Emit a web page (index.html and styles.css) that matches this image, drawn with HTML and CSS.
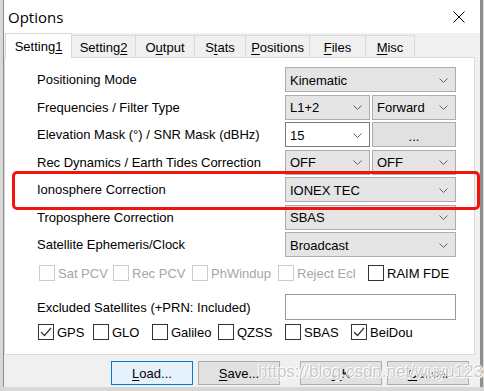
FILE: index.html
```html
<!DOCTYPE html>
<html lang="en">
<head>
    <meta charset="UTF-8">
    <title>Options</title>
    <link rel="stylesheet" href="styles.css">
</head>
<body>
    <div class="window">
        <div class="titlebar">
            <span class="title">Options</span>
            <svg class="close" width="12" height="12" viewBox="0 0 12 12">
                <path d="M0.5 0.5 L11.5 11.5 M11.5 0.5 L0.5 11.5" stroke="#000" stroke-width="1" fill="none"/>
            </svg>
        </div>

        <div class="tabs">
            <div class="tab active">Setting<u>1</u></div>
            <div class="tab">Setting<u>2</u></div>
            <div class="tab">O<u>u</u>tput</div>
            <div class="tab">S<u>t</u>ats</div>
            <div class="tab"><u>P</u>ositions</div>
            <div class="tab"><u>F</u>iles</div>
            <div class="tab"><u>M</u>isc</div>
        </div>

        <div class="panel">
            <div class="settings">
                <div class="label">Positioning Mode</div>
                <div class="combo span2">Kinematic<svg class="chev" width="9" height="5" viewBox="0 0 9 5"><path d="M0.5 0.5 L4.5 4.5 L8.5 0.5" /></svg></div>

                <div class="label">Frequencies / Filter Type</div>
                <div class="combo">L1+2<svg class="chev" width="9" height="5" viewBox="0 0 9 5"><path d="M0.5 0.5 L4.5 4.5 L8.5 0.5" /></svg></div>
                <div class="combo">Forward<svg class="chev" width="9" height="5" viewBox="0 0 9 5"><path d="M0.5 0.5 L4.5 4.5 L8.5 0.5" /></svg></div>

                <div class="label">Elevation Mask (°) / SNR Mask (dBHz)</div>
                <div class="combo edit">15<svg class="chev" width="9" height="5" viewBox="0 0 9 5"><path d="M0.5 0.5 L4.5 4.5 L8.5 0.5" /></svg></div>
                <div class="button dots">...</div>

                <div class="label">Rec Dynamics / Earth Tides Correction</div>
                <div class="combo">OFF<svg class="chev" width="9" height="5" viewBox="0 0 9 5"><path d="M0.5 0.5 L4.5 4.5 L8.5 0.5" /></svg></div>
                <div class="combo">OFF<svg class="chev" width="9" height="5" viewBox="0 0 9 5"><path d="M0.5 0.5 L4.5 4.5 L8.5 0.5" /></svg></div>

                <div class="label marked">Ionosphere Correction</div>
                <div class="combo span2">IONEX TEC<svg class="chev" width="9" height="5" viewBox="0 0 9 5"><path d="M0.5 0.5 L4.5 4.5 L8.5 0.5" /></svg></div>

                <div class="label">Troposphere Correction</div>
                <div class="combo span2">SBAS<svg class="chev" width="9" height="5" viewBox="0 0 9 5"><path d="M0.5 0.5 L4.5 4.5 L8.5 0.5" /></svg></div>

                <div class="label">Satellite Ephemeris/Clock</div>
                <div class="combo span2">Broadcast<svg class="chev" width="9" height="5" viewBox="0 0 9 5"><path d="M0.5 0.5 L4.5 4.5 L8.5 0.5" /></svg></div>
            </div>

            <div class="checks opts">
                <div class="check disabled"><span class="box"></span>Sat PCV</div>
                <div class="check disabled"><span class="box"></span>Rec PCV</div>
                <div class="check disabled"><span class="box"></span>PhWindup</div>
                <div class="check disabled"><span class="box"></span>Reject Ecl</div>
                <div class="check"><span class="box"></span>RAIM FDE</div>
            </div>

            <div class="excl">
                <div class="label">Excluded Satellites (+PRN: Included)</div>
                <div class="textbox"></div>
            </div>

            <div class="checks systems">
                <div class="check"><span class="box"><svg width="14" height="14" viewBox="0 0 14 14"><path d="M2 7 L5.5 10.5 L12 3" /></svg></span>GPS</div>
                <div class="check"><span class="box"></span>GLO</div>
                <div class="check"><span class="box"></span>Galileo</div>
                <div class="check"><span class="box"></span>QZSS</div>
                <div class="check"><span class="box"></span>SBAS</div>
                <div class="check"><span class="box"><svg width="14" height="14" viewBox="0 0 14 14"><path d="M2 7 L5.5 10.5 L12 3" /></svg></span>BeiDou</div>
            </div>
        </div>

        <div class="buttons">
            <div class="btn default"><u>L</u>oad...</div>
            <div class="btn"><u>S</u>ave...</div>
            <div class="btn ok"><u>O</u>K</div>
            <div class="btn"><u>C</u>ancel</div>
            <div class="watermark">https://blog.csdn.net/wuyu123</div>
        </div>
    </div>
</body>
</html>
```

FILE: styles.css
```css
* {
    margin: 0;
    padding: 0;
    box-sizing: border-box;
}

body {
    width: 484px;
    height: 391px;
    overflow: hidden;
    background: #d8d8d8;
    font-family: "Liberation Sans", Arial, sans-serif;
    font-size: 13px;
    color: #000;
}

u {
    text-decoration: underline;
    text-underline-offset: 2px;
}

.window {
    margin-left: 3px;
    width: 480px;
    height: 387px;
    background: #f0f0f0;
    border-left: 1px solid #8c8c8c;
    border-right: 3px solid #8e8e8e;
    display: flex;
    flex-direction: column;
}

/* title bar */
.titlebar {
    height: 33px;
    background: #fff;
    display: flex;
    align-items: center;
    justify-content: space-between;
    padding: 0 15px 0 4px;
}

.title {
    font-family: "Open Sans", sans-serif;
    font-size: 15px;
    margin-top: 1px;
}

/* tabs */
.tabs {
    height: 24px;
    display: grid;
    grid-template-columns: 67px 64px 59px 51px 64px 56px 49px;
    align-items: end;
    padding-left: 1px;
    position: relative;
    z-index: 1;
}

.tab {
    height: 22px;
    border: 1px solid #d9d9d9;
    border-bottom: none;
    border-left: none;
    background: #f0f0f0;
    display: flex;
    align-items: center;
    justify-content: center;
    padding-top: 1px;
}

.tab.active {
    height: 25px;
    margin-bottom: -1px;
    background: #fff;
    border-left: 1px solid #d9d9d9;
    padding-top: 0;
}

/* page */
.panel {
    height: 298px;
    margin-right: 5px;
    background: #fff;
    border: 1px solid #d9d9d9;
    padding: 9px 18px 0 32px;
}

.settings {
    display: grid;
    grid-template-columns: 1fr 85px 84px;
    grid-auto-rows: 25px;
    column-gap: 2px;
    row-gap: 2.5px;
    align-items: center;
}

.label {
    white-space: nowrap;
}

/* red annotation round the ionosphere row */
.marked {
    position: relative;
    align-self: stretch;
    display: flex;
    align-items: center;
}

.marked::after {
    content: "";
    position: absolute;
    left: -25px;
    top: -6px;
    width: 462px;
    height: 33px;
    border: 3px solid #f2140c;
    border-radius: 5px;
}

.combo {
    height: 100%;
    display: flex;
    align-items: center;
    justify-content: space-between;
    padding: 1px 7px 0 4px;
    background: #e5e5e5;
    border: 1px solid #adadad;
}

.combo.span2 {
    grid-column: span 2;
}

.combo.edit {
    background: #fff;
    border-color: #7a7a7a;
}

.chev {
    fill: none;
    stroke: #606060;
    stroke-width: 1;
}

.button {
    height: 100%;
    display: flex;
    align-items: center;
    justify-content: center;
    background: #e1e1e1;
    border: 1px solid #adadad;
}

.dots {
    padding-top: 4px;
}

/* checkboxes */
.checks {
    height: 20px;
    display: grid;
    align-items: center;
}

.opts {
    margin-top: 6px;
    padding-left: 2px;
    grid-template-columns: 74px 79px 86px 90px auto;
}

.systems {
    margin-top: 2px;
    padding-left: 1px;
    grid-template-columns: 55px 59px 66px 67px 66px auto;
}

.check {
    display: flex;
    align-items: center;
    gap: 3px;
    white-space: nowrap;
}

.box {
    width: 16px;
    height: 16px;
    border: 1px solid #333;
    background: #fff;
    display: flex;
    align-items: center;
    justify-content: center;
}

.box svg {
    fill: none;
    stroke: #333;
    stroke-width: 1.2;
}

.check.disabled {
    color: #a6a6a6;
}

.check.disabled .box {
    border-color: #cccccc;
}

.excl {
    margin-top: 11px;
    height: 26px;
    display: grid;
    grid-template-columns: 1fr 171px;
    align-items: center;
}

.textbox {
    height: 100%;
    background: #fff;
    border: 1px solid #9a9a9a;
}

/* dialog buttons */
.buttons {
    height: 32px;
    display: flex;
    gap: 5px;
    padding: 6px 0 0 107px;
    position: relative;
}

.btn {
    width: 82px;
    height: 24px;
    display: flex;
    align-items: center;
    justify-content: center;
    background: #e1e1e1;
    border: 1px solid #adadad;
}

.btn.default {
    background: #e5f1fb;
    border-color: #0078d7;
}

.btn.ok {
    margin-left: 15px;
}

.watermark {
    position: absolute;
    left: 254px;
    top: 7px;
    font-size: 17px;
    color: rgba(190, 190, 190, 0.85);
    text-shadow: 0 0 1px #fff, 1px 1px 0 #fff, -1px -1px 0 #fff;
    white-space: nowrap;
}
```
